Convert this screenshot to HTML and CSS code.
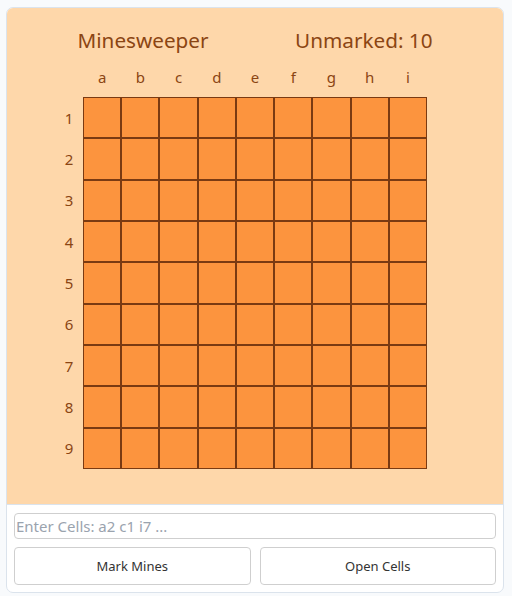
FILE: index.html
```html
<!DOCTYPE html>
<html>
<head>
<meta charset="utf-8">
<link rel="stylesheet" href="styles.css">
</head>
<body>
<div class="card">
  <div class="board-area">
    <div class="header">
      <span class="title">Minesweeper</span>
      <span class="count">Unmarked: 10</span>
    </div>
    <div class="board">
      <div class="col-labels">
        <span>a</span><span>b</span><span>c</span><span>d</span><span>e</span><span>f</span><span>g</span><span>h</span><span>i</span>
      </div>
      <div class="board-body">
        <div class="row-labels">
          <span>1</span><span>2</span><span>3</span><span>4</span><span>5</span><span>6</span><span>7</span><span>8</span><span>9</span>
        </div>
        <div class="grid" id="grid"></div>
        <div class="row-spacer"></div>
      </div>
    </div>
  </div>
  <div class="controls">
    <input class="cells-input" type="text" placeholder="Enter Cells: a2 c1 i7 ...">
    <div class="buttons">
      <button class="btn">Mark Mines</button>
      <button class="btn">Open Cells</button>
    </div>
  </div>
</div>
<script>
  var g = document.getElementById('grid');
  for (var i = 0; i < 81; i++) {
    var c = document.createElement('div');
    c.className = 'cell';
    g.appendChild(c);
  }
</script>
</body>
</html>
```

FILE: styles.css
```css
html, body {
  margin: 0;
  padding: 0;
}
body {
  background: #f8fafc;
  padding: 7px 8px 0 6px;
  font-family: "Noto Sans", "Open Sans", sans-serif;
}
.card {
  border: 1px solid #dbe3ec;
  border-radius: 7px;
  background: #ffffff;
  overflow: hidden;
}
.board-area {
  background: #fed7aa;
  padding: 18px 0 35px;
  border-bottom: 1px solid #dbe3ec;
  color: #8b4513;
}
.header {
  width: 355px;
  margin: 0 auto;
  display: flex;
  justify-content: space-between;
  font-size: 20.7px;
  line-height: 28px;
}
.board {
  width: 400px;
  margin: 13px auto 0;
}
.col-labels {
  display: grid;
  grid-template-columns: repeat(9, 1fr);
  margin: 0 28px 10px 28px;
  font-size: 15px;
  line-height: 20px;
  text-align: center;
}
.board-body {
  display: flex;
}
.row-labels {
  width: 28px;
  display: grid;
  grid-template-rows: repeat(9, 1fr);
  font-size: 15px;
  align-items: center;
  text-align: center;
}
.row-spacer {
  width: 28px;
}
.grid {
  width: 344px;
  height: 372px;
  display: grid;
  grid-template-columns: repeat(9, 1fr);
  grid-template-rows: repeat(9, 1fr);
}
.cell {
  background: #fc943e;
  border: 1px solid #7a3a12;
}
.controls {
  padding: 8px 7px 7px;
  display: flex;
  flex-direction: column;
  gap: 8px;
}
.cells-input {
  height: 26px;
  box-sizing: border-box;
  border: 1px solid #cfcfcf;
  border-radius: 4px;
  padding: 0 1px;
  font-family: "Noto Sans", "Open Sans", sans-serif;
  font-size: 15px;
  color: #333;
  background: #fff;
  outline: none;
}
.cells-input::placeholder {
  color: #9aa3ae;
}
.buttons {
  display: grid;
  grid-template-columns: 1fr 1fr;
  gap: 9px;
}
.btn {
  height: 38px;
  border: 1px solid #cfcfcf;
  border-radius: 4px;
  background: #fff;
  font-family: "Noto Sans", "Open Sans", sans-serif;
  font-size: 13px;
  color: #333;
}
```
